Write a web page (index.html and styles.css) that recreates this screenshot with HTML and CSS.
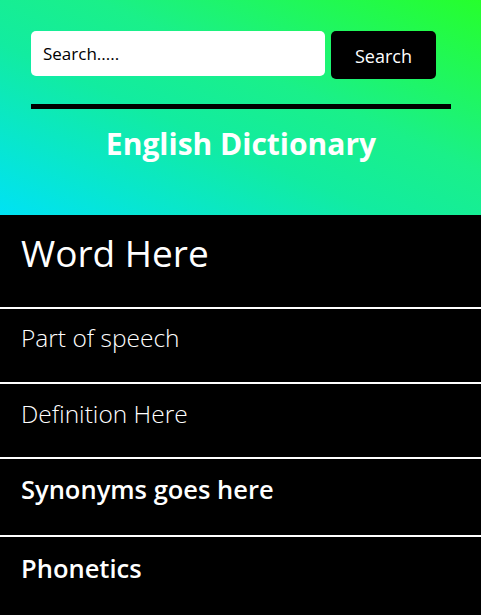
FILE: index.html
```html
<!DOCTYPE html>
<html lang="en">
<head>
<meta charset="utf-8">
<title>English Dictionary</title>
<link rel="stylesheet" href="styles.css">
</head>
<body>
<header class="top">
  <form class="search">
    <input class="search-input" type="text" placeholder="Search.....">
    <button class="search-btn" type="button">Search</button>
  </form>
  <div class="rule"></div>
  <h2 class="title">English Dictionary</h2>
</header>
<main class="results">
  <section class="row row-word"><h1 class="word">Word Here</h1></section>
  <section class="row row-pos"><p class="light">Part of speech</p></section>
  <section class="row row-def"><p class="light">Definition Here</p></section>
  <section class="row row-syn"><h3 class="strong">Synonyms goes here</h3></section>
  <section class="row row-pho"><h3 class="strong">Phonetics</h3></section>
</main>
</body>
</html>
```
FILE: styles.css
```css
* { box-sizing: border-box; }
html, body { margin: 0; padding: 0; }
body {
  font-family: "Open Sans", "Noto Sans", sans-serif;
  background: #000;
  color: #fff;
  width: 481px;
}
.top {
  height: 215px;
  padding: 31px 30px 0 31px;
  background: linear-gradient(to top right, #00e2f4 0%, #12eca0 40%, #1af089 60%, #26ff2c 100%);
}
.search {
  display: flex;
  align-items: flex-start;
  gap: 6px;
  margin: 0;
}
.search-input {
  width: 294px;
  height: 45px;
  border: none;
  border-radius: 5px;
  background: #fff;
  padding: 0 12px;
  font-family: inherit;
  font-size: 17px;
  color: #000;
  outline: none;
}
.search-input::placeholder { color: #000; opacity: 1; }
.search-btn {
  width: 105px;
  height: 48px;
  border: none;
  border-radius: 5px;
  background: #000;
  color: #fff;
  font-family: inherit;
  font-size: 18px;
  padding: 2px 0 0;
}
.rule {
  margin-top: 25px;
  width: 420px;
  height: 5px;
  background: #000;
}
.title {
  margin: 17px 0 0;
  text-align: center;
  font-size: 30px;
  line-height: 36px;
  font-weight: 700;
  color: #fff;
}
.row {
  padding: 0 21px;
  border-bottom: 2px solid #fff;
}
.row h1, .row h3, .row p { margin: 0; }
.row-word { height: 94px; padding-top: 14px; }
.word { font-size: 37px; line-height: 48px; font-weight: 400; }
.row-pos { height: 75px; padding-top: 14px; }
.row-def { height: 75px; padding-top: 15px; }
.row-syn { height: 78px; padding-top: 15px; }
.row-pho { height: 78px; padding-top: 16px; border-bottom: none; }
.light { font-size: 24.5px; line-height: 30px; font-weight: 300; color: #fff; }
.strong { font-size: 25.5px; line-height: 30px; font-weight: 600; }
```
